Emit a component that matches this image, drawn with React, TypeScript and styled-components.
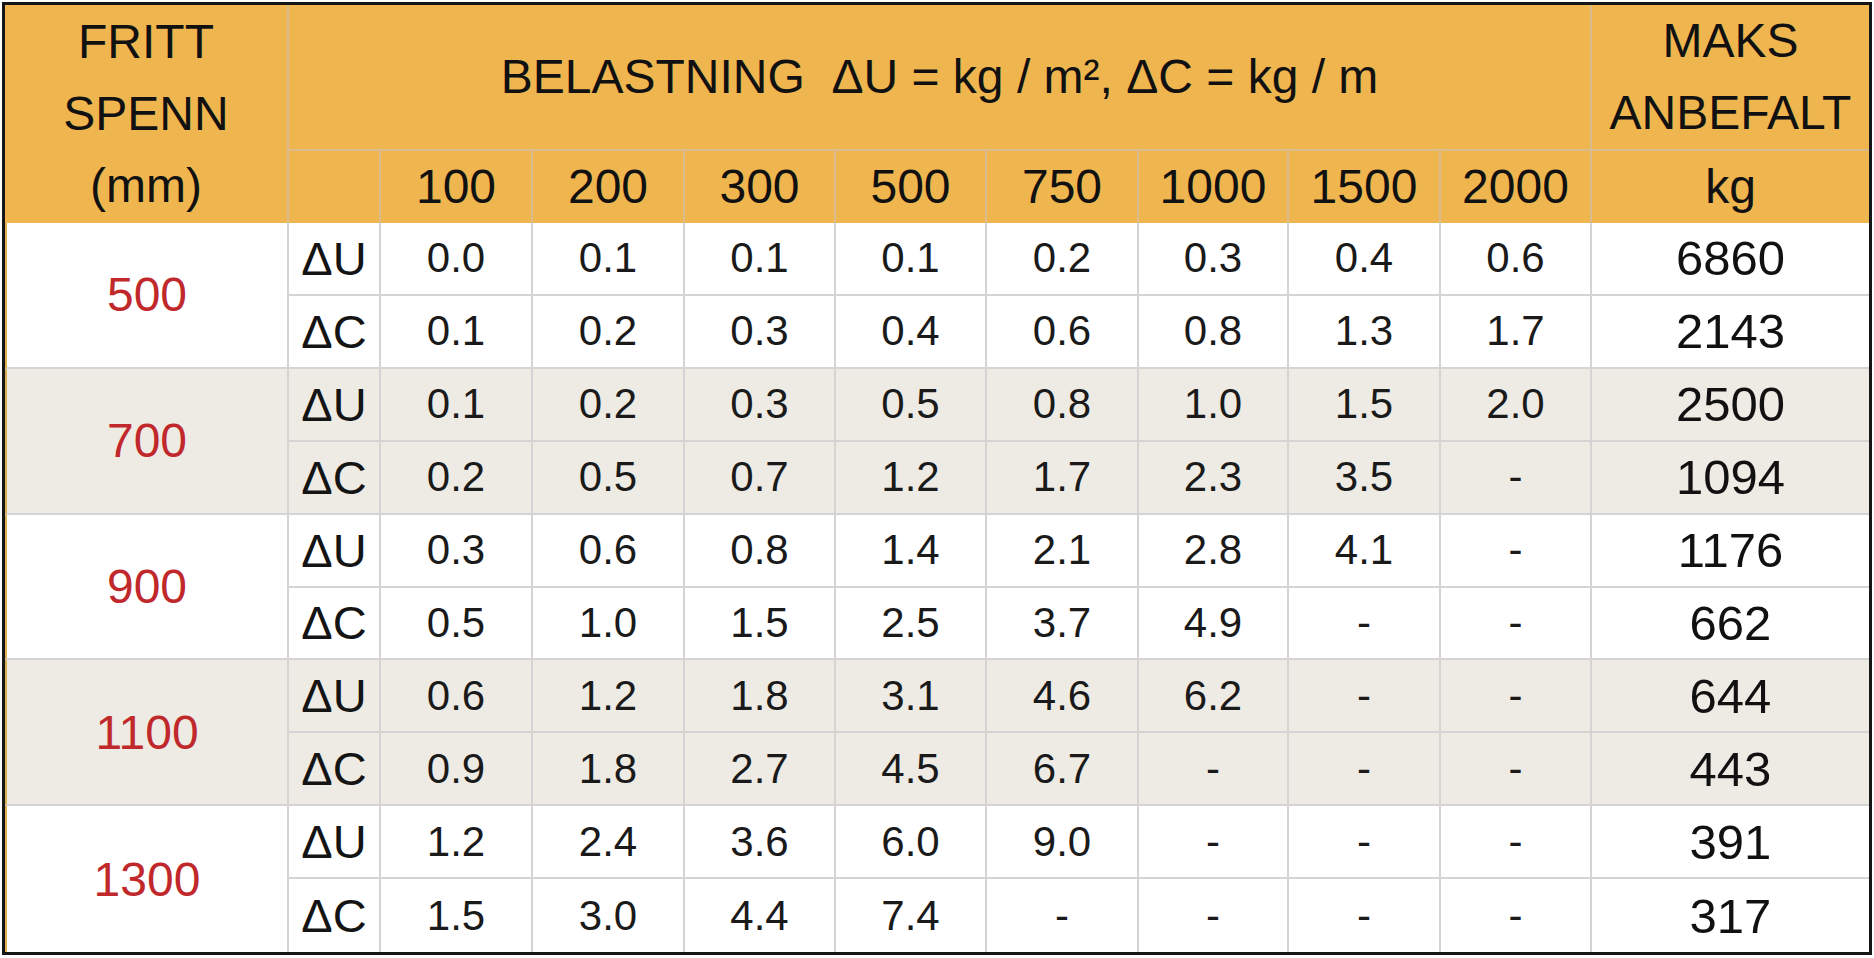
import React from "react";
import styled, { createGlobalStyle, css } from "styled-components";

const GlobalStyle = createGlobalStyle`
  html, body {
    margin: 0;
    padding: 0;
    background: #ffffff;
  }
  body {
    font-family: "Liberation Sans", Arial, sans-serif;
  }
`;

const HEAD_BG = "#efb54f";
const HEAD_LINE = "#d9bb8d";
const BODY_LINE = "#d4d4d4";
const ALT_BG = "#eeebe4";

const Page = styled.div`
  padding: 2px 2px 3px 2px;
`;

const Table = styled.div`
  box-sizing: border-box;
  width: 1870px;
  height: 953px;
  border: 3px solid #161616;
  display: grid;
  grid-template-columns: 284px 92px 152px 152px 151px 151px 152px 150px 152px 151px 1fr;
  grid-template-rows: 146px 72px repeat(10, 1fr);
  font-family: "Liberation Sans", Arial, sans-serif;
`;

const cellBase = css`
  box-sizing: border-box;
  display: flex;
  align-items: center;
  justify-content: center;
  text-align: center;
  white-space: pre;
`;

const HeadCell = styled.div<{ $span?: number; $rows?: number; $right?: boolean; $bottom?: boolean; $lh?: number }>`
  ${cellBase};
  background: ${HEAD_BG};
  color: #111;
  font-size: 48px;
  line-height: ${(p) => p.$lh ?? 72}px;
  grid-column: span ${(p) => p.$span ?? 1};
  grid-row: span ${(p) => p.$rows ?? 1};
  border-right: ${(p) => (p.$right ? `2px solid ${HEAD_LINE}` : "none")};
  border-bottom: ${(p) => (p.$bottom ? `2px solid ${HEAD_LINE}` : "none")};
`;

const bodyBorders = css<{ $last?: boolean; $alt?: boolean }>`
  background: ${(p) => (p.$alt ? ALT_BG : "#ffffff")};
  border-bottom: ${(p) => (p.$last ? "none" : `2px solid ${BODY_LINE}`)};
`;

const SpanCell = styled.div<{ $last?: boolean; $alt?: boolean }>`
  ${cellBase};
  ${bodyBorders};
  grid-row: span 2;
  border-left: 2px solid #dcae52;
  border-right: 2px solid ${BODY_LINE};
  color: #c0282b;
  font-size: 48px;
`;

const LabelCell = styled.div<{ $last?: boolean; $alt?: boolean }>`
  ${cellBase};
  ${bodyBorders};
  border-right: 2px solid ${BODY_LINE};
  color: #141414;
  font-size: 47px;
`;

const ValueCell = styled.div<{ $last?: boolean; $alt?: boolean }>`
  ${cellBase};
  ${bodyBorders};
  border-right: 2px solid ${BODY_LINE};
  color: #1a1a1a;
  font-size: 42px;
`;

const MaxCell = styled.div<{ $last?: boolean; $alt?: boolean }>`
  ${cellBase};
  ${bodyBorders};
  color: #111;
  font-size: 49px;
`;

const loads = ["100", "200", "300", "500", "750", "1000", "1500", "2000"];

type Group = {
  span: string;
  u: string[];
  umax: string;
  c: string[];
  cmax: string;
};

const groups: Group[] = [
  {
    span: "500",
    u: ["0.0", "0.1", "0.1", "0.1", "0.2", "0.3", "0.4", "0.6"],
    umax: "6860",
    c: ["0.1", "0.2", "0.3", "0.4", "0.6", "0.8", "1.3", "1.7"],
    cmax: "2143",
  },
  {
    span: "700",
    u: ["0.1", "0.2", "0.3", "0.5", "0.8", "1.0", "1.5", "2.0"],
    umax: "2500",
    c: ["0.2", "0.5", "0.7", "1.2", "1.7", "2.3", "3.5", "-"],
    cmax: "1094",
  },
  {
    span: "900",
    u: ["0.3", "0.6", "0.8", "1.4", "2.1", "2.8", "4.1", "-"],
    umax: "1176",
    c: ["0.5", "1.0", "1.5", "2.5", "3.7", "4.9", "-", "-"],
    cmax: "662",
  },
  {
    span: "1100",
    u: ["0.6", "1.2", "1.8", "3.1", "4.6", "6.2", "-", "-"],
    umax: "644",
    c: ["0.9", "1.8", "2.7", "4.5", "6.7", "-", "-", "-"],
    cmax: "443",
  },
  {
    span: "1300",
    u: ["1.2", "2.4", "3.6", "6.0", "9.0", "-", "-", "-"],
    umax: "391",
    c: ["1.5", "3.0", "4.4", "7.4", "-", "-", "-", "-"],
    cmax: "317",
  },
];

export default function App() {
  return (
    <>
      <GlobalStyle />
      <Page>
        <Table>
          <HeadCell $rows={2} $right>
            {"FRITT\nSPENN\n(mm)"}
          </HeadCell>
          <HeadCell $span={9} $right $bottom>
            {"BELASTNING  \u0394U = kg / m\u00B2, \u0394C = kg / m"}
          </HeadCell>
          <HeadCell $bottom>{"MAKS\nANBEFALT"}</HeadCell>

          <HeadCell $right />
          {loads.map((l) => (
            <HeadCell key={l} $right>
              {l}
            </HeadCell>
          ))}
          <HeadCell>kg</HeadCell>

          {groups.map((g, gi) => {
            const alt = gi % 2 === 1;
            const lastGroup = gi === groups.length - 1;
            return (
              <React.Fragment key={g.span}>
                <SpanCell $alt={alt} $last={lastGroup}>
                  {g.span}
                </SpanCell>
                <LabelCell $alt={alt}>{"\u0394U"}</LabelCell>
                {g.u.map((v, i) => (
                  <ValueCell key={`u${i}`} $alt={alt}>
                    {v}
                  </ValueCell>
                ))}
                <MaxCell $alt={alt}>{g.umax}</MaxCell>

                <LabelCell $alt={alt} $last={lastGroup}>
                  {"\u0394C"}
                </LabelCell>
                {g.c.map((v, i) => (
                  <ValueCell key={`c${i}`} $alt={alt} $last={lastGroup}>
                    {v}
                  </ValueCell>
                ))}
                <MaxCell $alt={alt} $last={lastGroup}>
                  {g.cmax}
                </MaxCell>
              </React.Fragment>
            );
          })}
        </Table>
      </Page>
    </>
  );
}
